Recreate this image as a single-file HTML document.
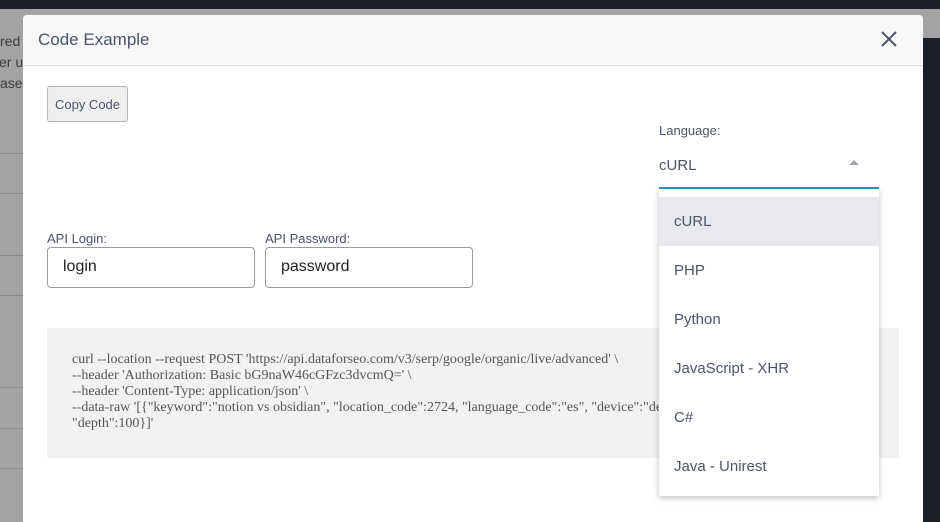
<!DOCTYPE html>
<html><head><meta charset="utf-8"><style>
*{box-sizing:border-box;margin:0;padding:0}
html,body{width:940px;height:522px;overflow:hidden}
body{background:#a3a3a3;font-family:"Liberation Sans",sans-serif;position:relative}
.top{position:absolute;left:0;top:0;width:940px;height:9px;background:#1b1f2b}
.rdark{position:absolute;left:923px;top:38px;width:17px;height:484px;background:#1b1f2b}
.lt{position:absolute;left:0;font-size:14px;color:#3e3e3e}
.hl{position:absolute;left:0;width:23px;height:1px;background:#8a8a8a}
.modal{position:absolute;left:23px;top:15px;width:900px;height:507px;background:#fff;border-radius:4px 4px 0 0;overflow:hidden}
.hdr{height:51px;background:#f8f8f8;border-bottom:1px solid #dcdcdc;position:relative}
.hdr .t{position:absolute;left:15px;top:15px;font-size:17px;color:#4b5568}
.x{position:absolute;left:856px;top:14px}
.btn{position:absolute;left:24px;top:71px;width:81px;height:36px;background:#efefef;border:1px solid #b5b5b5;border-radius:3px;font-size:13px;color:#4b5568;text-align:center;line-height:35px}
.lbl{position:absolute;font-size:13px;color:#4b5568}
.inp{position:absolute;top:232px;height:41px;border:1px solid #9a9a9a;border-radius:4px;font-size:16px;color:#222;padding:10px 0 0 15px}
.code{position:absolute;left:24px;top:313px;width:852px;height:130px;background:#f1f2f2;font-family:"Liberation Serif",serif;font-size:14px;line-height:16px;color:#555;padding:24px 0 0 25px;white-space:nowrap;overflow:hidden}
.sel{position:absolute;left:636px;top:142px;font-size:15px;color:#4b5568}
.ul{position:absolute;left:636px;top:172px;width:220px;height:2px;background:#2299c4}
.caret{position:absolute;left:826px;top:145px;width:0;height:0;border-left:5px solid transparent;border-right:5px solid transparent;border-bottom:5px solid #a0a4aa}
.dd{position:absolute;left:659px;top:189px;width:220px;height:307px;background:#fff;box-shadow:0 2px 6px rgba(0,0,0,.25);padding-top:8px}
.dd div{height:49px;line-height:50px;padding-left:15px;font-size:15px;color:#4b5568}
.dd .a{background:#e8e9ed}
</style></head><body>
<div class="top"></div>
<div class="rdark"></div>
<div class="lt" style="top:33px">red</div>
<div class="lt" style="top:54px;left:-1px">er u</div>
<div class="lt" style="top:75px">ase</div>
<div class="hl" style="top:153px"></div><div class="hl" style="top:193px"></div><div class="hl" style="top:255px"></div><div class="hl" style="top:295px"></div><div class="hl" style="top:387px"></div><div class="hl" style="top:428px"></div><div class="hl" style="top:468px"></div>
<div class="modal">
<div class="hdr"><div class="t">Code Example</div>
<svg class="x" width="20" height="20" viewBox="0 0 20 20"><path d="M3 3L17 17M17 3L3 17" stroke="#4b5568" stroke-width="2"/></svg></div>
<div class="btn">Copy Code</div>
<div class="lbl" style="left:636px;top:108px">Language:</div>
<div class="sel">cURL</div><div class="caret"></div><div class="ul"></div>
<div class="lbl" style="left:24px;top:216px">API Login:</div>
<div class="lbl" style="left:242px;top:216px">API Password:</div>
<div class="inp" style="left:24px;width:208px">login</div>
<div class="inp" style="left:242px;width:208px">password</div>
<div class="code">curl --location --request POST 'https://api.dataforseo.com/v3/serp/google/organic/live/advanced' \<br>--header 'Authorization: Basic bG9naW46cGFzc3dvcmQ=' \<br>--header 'Content-Type: application/json' \<br>--data-raw '[{"keyword":"notion vs obsidian", "location_code":2724, "language_code":"es", "device":"desktop", "os":"windows",<br>"depth":100}]'</div>
</div>
<div class="dd"><div class="a">cURL</div><div>PHP</div><div>Python</div><div>JavaScript - XHR</div><div>C#</div><div>Java - Unirest</div></div>
</body></html>
